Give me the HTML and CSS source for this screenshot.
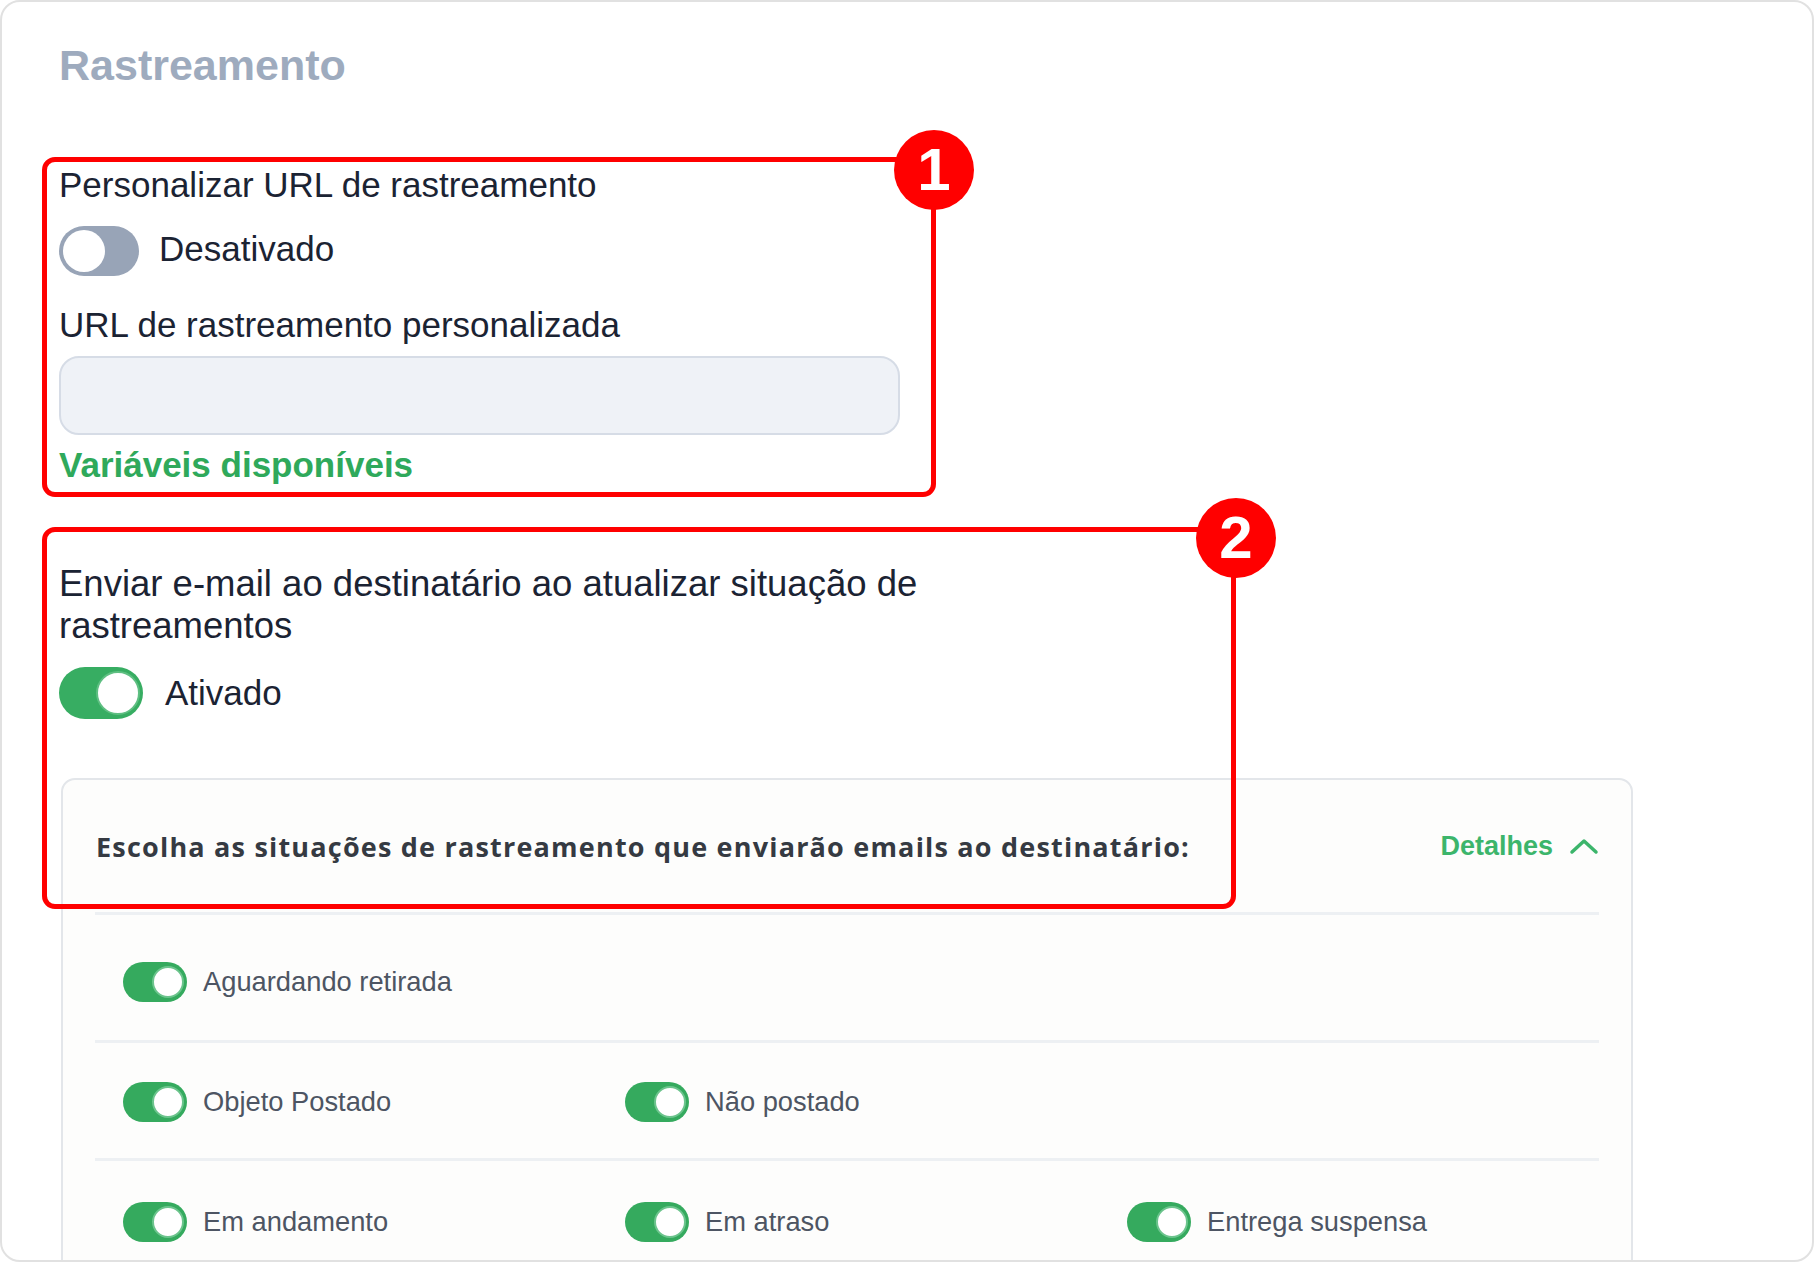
FILE: index.html
```html
<!DOCTYPE html>
<html lang="pt-BR">
<head>
<meta charset="utf-8">
<title>Rastreamento</title>
<link rel="stylesheet" href="styles.css">
</head>
<body>
<div class="card">
  <h1 class="title">Rastreamento</h1>

  <section class="group group-url">
    <div class="label label-first">Personalizar URL de rastreamento</div>
    <div class="switch-row row-off">
      <span class="switch switch-off"><span class="knob"></span></span>
      <span class="switch-text">Desativado</span>
    </div>
    <div class="label label-url">URL de rastreamento personalizada</div>
    <input class="text-input" type="text">
    <a class="link">Variáveis disponíveis</a>
  </section>

  <section class="group group-email">
    <div class="label label-wide">Enviar e-mail ao destinatário ao atualizar situação de rastreamentos</div>
    <div class="switch-row row-on">
      <span class="switch switch-on"><span class="knob"></span></span>
      <span class="switch-text">Ativado</span>
    </div>
  </section>

  <div class="status-card">
    <div class="status-head">
      <span class="status-title">Escolha as situações de rastreamento que enviarão emails ao destinatário:</span>
      <span class="details">Detalhes
        <svg class="chevron" width="30" height="18" viewBox="0 0 30 18"><polyline points="3,15 15,4 27,15" fill="none" stroke="#3cb56b" stroke-width="3.5" stroke-linecap="round" stroke-linejoin="round"/></svg>
      </span>
    </div>
    <div class="status-row row-1">
      <div class="item"><span class="mini-switch"><span class="mini-knob"></span></span><span class="item-text">Aguardando retirada</span></div>
    </div>
    <div class="status-row row-2">
      <div class="item"><span class="mini-switch"><span class="mini-knob"></span></span><span class="item-text">Objeto Postado</span></div>
      <div class="item"><span class="mini-switch"><span class="mini-knob"></span></span><span class="item-text">Não postado</span></div>
    </div>
    <div class="status-row row-3">
      <div class="item"><span class="mini-switch"><span class="mini-knob"></span></span><span class="item-text">Em andamento</span></div>
      <div class="item"><span class="mini-switch"><span class="mini-knob"></span></span><span class="item-text">Em atraso</span></div>
      <div class="item"><span class="mini-switch"><span class="mini-knob"></span></span><span class="item-text">Entrega suspensa</span></div>
    </div>
  </div>

  <div class="callout callout-1"><span class="badge">1</span></div>
  <div class="callout callout-2"><span class="badge">2</span></div>
</div>
</body>
</html>
```
FILE: styles.css
```css
* { box-sizing: border-box; }
html, body { margin: 0; padding: 0; background: #ffffff; }
body {
  font-family: "Liberation Sans", Arial, sans-serif;
  color: #1b2333;
}
.card {
  position: relative;
  width: 1814px;
  height: 1262px;
  border: 2px solid #e1e1e1;
  border-radius: 20px;
  overflow: hidden;
  background: #ffffff;
  padding: 38px 0 0 57px;
  display: flex;
  flex-direction: column;
  align-items: flex-start;
}
.title {
  margin: 0;
  font-size: 43px;
  line-height: 50px;
  font-weight: 700;
  color: #9eabbe;
}
.group {
  display: flex;
  flex-direction: column;
  align-items: flex-start;
}
.label {
  font-size: 35px;
  line-height: 42px;
  color: #1b2333;
}
.label-first { margin-top: 74px; }
.switch-row {
  display: flex;
  align-items: center;
}
.row-off { margin-top: 20px; }
.switch {
  position: relative;
  display: inline-block;
  border-radius: 999px;
  flex: none;
}
.switch-off {
  width: 80px;
  height: 50px;
  background: #98a4b7;
}
.switch-off .knob {
  position: absolute;
  left: 4px;
  top: 4px;
  width: 42px;
  height: 42px;
  border-radius: 50%;
  background: #ffffff;
}
.switch-on {
  width: 84px;
  height: 52px;
  background: #37ad62;
}
.switch-on .knob {
  position: absolute;
  right: 3px;
  top: 4px;
  width: 44px;
  height: 44px;
  border-radius: 50%;
  background: #ffffff;
  border: 2px solid #5fbf82;
}
.switch-text {
  font-size: 35px;
  line-height: 42px;
  color: #1b2333;
}
.row-off .switch-text { margin-left: 20px; margin-bottom: 5px; }
.row-on .switch-text { margin-left: 22px; }
.label-url { margin-top: 28px; }
.text-input {
  margin-top: 10px;
  width: 841px;
  height: 79px;
  border: 2px solid #d6dce6;
  border-radius: 20px;
  background: #eff2f7;
  outline: none;
}
.link {
  margin-top: 9px;
  font-size: 35px;
  line-height: 42px;
  font-weight: 700;
  color: #2fa95b;
}
.group-email { margin-top: 77px; }
.label-wide {
  width: 900px;
  font-size: 36.5px;
  line-height: 42px;
}
.row-on { margin-top: 20px; }

.status-card {
  margin-top: 59px;
  margin-left: 2px;
  width: 1572px;
  flex: none;
  border: 2px solid #e3e6ea;
  border-radius: 14px;
  background: #fdfdfc;
  padding: 0 32px;
}
.status-head {
  height: 135px;
  display: flex;
  align-items: center;
  justify-content: space-between;
  border-bottom: 3px solid #edf0f3;
}
.status-title {
  font-family: "Open Sans", "Liberation Sans", sans-serif;
  font-weight: 700;
  font-size: 27px;
  letter-spacing: 1.2px;
  color: #353a42;
  padding-left: 1px;
}
.details {
  display: flex;
  align-items: center;
  gap: 16px;
  font-size: 27px;
  font-weight: 700;
  color: #3cb56b;
}
.status-row {
  display: grid;
  grid-template-columns: 502px 502px 502px;
  padding-left: 28px;
  border-bottom: 3px solid #edf0f3;
}
.row-1 { padding-top: 47px; padding-bottom: 38px; }
.row-2 { padding-top: 39px; padding-bottom: 36px; }
.row-3 { padding-top: 41px; padding-bottom: 40px; border-bottom: none; }
.item {
  display: flex;
  align-items: center;
}
.mini-switch {
  position: relative;
  flex: none;
  width: 64px;
  height: 40px;
  border-radius: 999px;
  background: #35aa5e;
}
.mini-knob {
  position: absolute;
  right: 3px;
  top: 4px;
  width: 32px;
  height: 32px;
  border-radius: 50%;
  background: #ffffff;
  border: 2px solid #6cc48d;
}
.item-text {
  margin-left: 16px;
  font-size: 27.3px;
  line-height: 32px;
  color: #4d5563;
}

.callout {
  position: absolute;
  border: 5px solid #ff0000;
  border-radius: 13px;
  pointer-events: none;
}
.callout-1 {
  left: 40px;
  top: 155px;
  width: 894px;
  height: 340px;
}
.callout-2 {
  left: 40px;
  top: 525px;
  width: 1194px;
  height: 382px;
}
.badge {
  position: absolute;
  width: 80px;
  height: 80px;
  border-radius: 50%;
  background: #ff0000;
  color: #ffffff;
  font-weight: 700;
  font-size: 60px;
  line-height: 80px;
  text-align: center;
}
.callout-1 .badge { left: 847px; top: -32px; }
.callout-2 .badge { left: 1149px; top: -34px; }
```
